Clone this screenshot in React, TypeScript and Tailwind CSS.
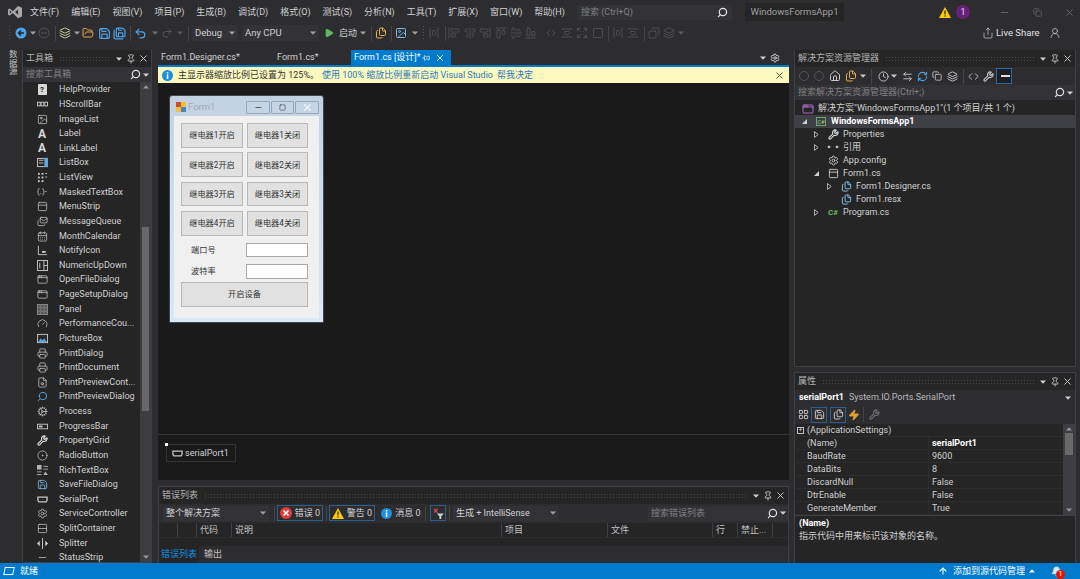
import type { ReactNode } from "react";
import {
  AlignCenterHorizontal, AlignCenterVertical, AlignEndHorizontal, AlignEndVertical,
  AlignHorizontalSpaceAround, AlignStartHorizontal, AlignStartVertical, AlignVerticalSpaceAround,
  AppWindow, ArrowLeftRight, ArrowUp, Bell, CalendarDays, ChevronsLeftRight, CircleDot, Clock,
  Code, Cog, Copy, Expand, FileSearch, Files, FolderOpen, Gauge, Home, Image,
  Layers, LayoutGrid, Mails, Minus, PanelTop, Pin, Play, Printer, Redo2, RefreshCw, Rows2, Save,
  SaveAll, Search, Settings, Share, Square, Undo2, UserRound, Wrench, X, Zap,
} from "lucide-react";

const menus = ["文件(F)", "编辑(E)", "视图(V)", "项目(P)", "生成(B)", "调试(D)", "格式(O)", "测试(S)", "分析(N)", "工具(T)", "扩展(X)", "窗口(W)", "帮助(H)"];

const Caret = ({ className = "" }: { className?: string }) => (
  <svg viewBox="0 0 6 4" className={`w-[6px] h-[4px] shrink-0 fill-current ${className}`}>
    <path d="M0 0.5h6L3 3.8z" />
  </svg>
);

const Sep = ({ className = "" }: { className?: string }) => (
  <div className={`w-px h-[15px] shrink-0 bg-[#46464a] ${className}`} />
);

const Grip = ({ className = "" }: { className?: string }) => (
  <div className={`w-[4px] h-[16px] shrink-0 bg-[radial-gradient(#55555a_1px,transparent_1px)] bg-[length:3px_3px] ${className}`} />
);

const InfoDot = ({ className = "" }: { className?: string }) => (
  <svg viewBox="0 0 12 12" className={`w-[11px] h-[11px] shrink-0 ${className}`}>
    <circle cx="6" cy="6" r="6" fill="#1c8fe0" />
    <rect x="5.2" y="2.2" width="1.7" height="1.7" fill="#fff" />
    <rect x="5.2" y="4.8" width="1.7" height="5" fill="#fff" />
  </svg>
);

const PanelHeader = ({ title }: { title: string }) => (
  <div className="h-[17px] shrink-0 flex items-center pl-[3px] pr-[2.5px] text-[#b4b4b4]">
    <span>{title}</span>
    <div className="flex-1 h-[5px] mx-[6px] bg-[radial-gradient(#46464a_0.8px,transparent_0.8px)] bg-[length:3px_3px]" />
    <Caret className="text-[#d0d0d0]" />
    <Pin size={10} strokeWidth={2} className="ml-[4px] text-[#d0d0d0]" />
    <X size={11} strokeWidth={2} className="ml-[1.5px] text-[#d0d0d0]" />
  </div>
);

const SearchBox = ({ placeholder, className = "" }: { placeholder: string; className?: string }) => (
  <div className={`flex items-center bg-[#333337] text-[#808080] pl-[3px] ${className}`}>
    <span className="flex-1 whitespace-nowrap">{placeholder}</span>
    <Search size={11} strokeWidth={2.6} className="text-[#e0e0e0] -scale-x-100" />
    <Caret className="ml-[2px] mr-[2px] w-[4px] text-[#d0d0d0]" />
  </div>
);

const HelpIcon = () => (
  <div className="w-[9px] h-[11px] rounded-[1px] bg-[#d8d8d8] text-[#252526] font-bold text-[8px] leading-[11px] text-center">?</div>
);
const HBar = () => (
  <svg viewBox="0 0 12 12" className="w-[11px] h-[11px]" fill="none" stroke="#c8c8c8">
    <rect x="0.5" y="3.5" width="3" height="4" /><rect x="4.5" y="3.5" width="3" height="4" /><rect x="8.5" y="3.5" width="3" height="4" />
  </svg>
);
const ListBoxIcon = () => (
  <svg viewBox="0 0 12 12" className="w-[11px] h-[11px]">
    <rect x="0.5" y="1.5" width="11" height="9" fill="none" stroke="#c8c8c8" />
    <rect x="2" y="3" width="5" height="1" fill="#c8c8c8" /><rect x="2" y="6" width="5" height="1" fill="#c8c8c8" />
    <rect x="8" y="1" width="4" height="10" fill="#5aa7e0" />
  </svg>
);
const ListViewIcon = () => (
  <svg viewBox="0 0 12 12" className="w-[11px] h-[11px]" fill="#d0d0d0">
    <rect x="1" y="1" width="2" height="2" /><rect x="5" y="1" width="2" height="2" /><rect x="9" y="1" width="2" height="1" />
    <rect x="1" y="5" width="2" height="2" /><rect x="5" y="5" width="2" height="2" /><rect x="9" y="5" width="2" height="1" />
    <rect x="1" y="9" width="2" height="2" /><rect x="5" y="9" width="2" height="2" />
  </svg>
);
const NotifyIcon = () => (
  <svg viewBox="0 0 12 12" className="w-[11px] h-[11px]" fill="none" stroke="#c8c8c8">
    <path d="M1.5 1v9.5H11" /><rect x="6" y="7" width="3" height="1" />
  </svg>
);
const NumericIcon = () => (
  <svg viewBox="0 0 12 12" className="w-[11px] h-[11px]" fill="none" stroke="#c8c8c8">
    <rect x="0.5" y="0.5" width="11" height="11" /><path d="M3 3v6M7.5 0.5v11M7.5 6h4" />
  </svg>
);
const PanelIcon = () => (
  <svg viewBox="0 0 12 12" className="w-[11px] h-[11px]">
    <rect x="0.5" y="0.5" width="11" height="11" fill="#58585c" stroke="#8a8a8a" /><path d="M4 1v10M8 1v10M1 4h10M1 8h10" stroke="#7a7a7a" />
  </svg>
);
const PictureIcon = () => (
  <svg viewBox="0 0 12 12" className="w-[11px] h-[11px]">
    <rect x="0.5" y="1.5" width="11" height="9" fill="#2a2a2c" stroke="#c8c8c8" /><path d="M1 10l3-4 2 2 2-2 3 4z" fill="#5aa7e0" />
  </svg>
);
const ProgressIcon = () => (
  <svg viewBox="0 0 12 12" className="w-[11px] h-[11px]">
    <rect x="0.5" y="3.5" width="11" height="5" fill="none" stroke="#c8c8c8" /><rect x="2" y="5" width="4" height="2" fill="#c8c8c8" />
  </svg>
);
const SerialIcon = () => (
  <svg viewBox="0 0 12 12" className="w-[11px] h-[11px] shrink-0" fill="none" stroke="#c8c8c8" strokeWidth="1.4">
    <path d="M1 3.5h10v3.5l-1 1.5H2L1 7z" />
  </svg>
);
const RichIcon = () => (
  <svg viewBox="0 0 12 12" className="w-[11px] h-[11px]" fill="#b0b0b0">
    <rect x="0" y="0" width="5" height="5" /><rect x="7" y="1" width="5" height="1" /><rect x="7" y="4" width="5" height="1" />
    <rect x="0" y="7" width="5" height="1" /><rect x="0" y="10" width="5" height="1" /><path d="M7 11l2-4 3 4z" />
  </svg>
);
const SplitterIcon = () => (
  <svg viewBox="0 0 12 12" className="w-[11px] h-[11px]" fill="#d0d0d0">
    <rect x="5.5" y="0" width="1" height="12" /><path d="M0 6l3-3v6zM12 6L9 3v6z" />
  </svg>
);

const ic = { size: 11, strokeWidth: 1.6, className: "text-[#c8c8c8]" };
const A = () => <span className="font-bold text-[12px] leading-none text-[#d8d8d8]">A</span>;

const toolbox: { name: string; icon: ReactNode }[] = [
  { name: "HelpProvider", icon: <HelpIcon /> },
  { name: "HScrollBar", icon: <HBar /> },
  { name: "ImageList", icon: <Image {...ic} /> },
  { name: "Label", icon: <A /> },
  { name: "LinkLabel", icon: <A /> },
  { name: "ListBox", icon: <ListBoxIcon /> },
  { name: "ListView", icon: <ListViewIcon /> },
  { name: "MaskedTextBox", icon: <span className="text-[8px] leading-none text-[#c8c8c8]">(.)-</span> },
  { name: "MenuStrip", icon: <PanelTop {...ic} /> },
  { name: "MessageQueue", icon: <Mails {...ic} /> },
  { name: "MonthCalendar", icon: <CalendarDays {...ic} /> },
  { name: "NotifyIcon", icon: <NotifyIcon /> },
  { name: "NumericUpDown", icon: <NumericIcon /> },
  { name: "OpenFileDialog", icon: <AppWindow {...ic} /> },
  { name: "PageSetupDialog", icon: <AppWindow {...ic} /> },
  { name: "Panel", icon: <PanelIcon /> },
  { name: "PerformanceCou...", icon: <Gauge {...ic} /> },
  { name: "PictureBox", icon: <PictureIcon /> },
  { name: "PrintDialog", icon: <Printer {...ic} /> },
  { name: "PrintDocument", icon: <Printer {...ic} /> },
  { name: "PrintPreviewCont...", icon: <FileSearch {...ic} /> },
  { name: "PrintPreviewDialog", icon: <Search size={11} strokeWidth={2} className="text-[#5aa7e0] -scale-x-100" /> },
  { name: "Process", icon: <Cog {...ic} /> },
  { name: "ProgressBar", icon: <ProgressIcon /> },
  { name: "PropertyGrid", icon: <Wrench size={11} strokeWidth={2.4} className="text-[#e0e0e0]" /> },
  { name: "RadioButton", icon: <CircleDot {...ic} /> },
  { name: "RichTextBox", icon: <RichIcon /> },
  { name: "SaveFileDialog", icon: <Save size={11} strokeWidth={1.8} className="text-[#7fb6e6]" /> },
  { name: "SerialPort", icon: <SerialIcon /> },
  { name: "ServiceController", icon: <Settings {...ic} /> },
  { name: "SplitContainer", icon: <Rows2 {...ic} /> },
  { name: "Splitter", icon: <SplitterIcon /> },
  { name: "StatusStrip", icon: <Minus {...ic} /> },
];

const gray = { size: 12, strokeWidth: 1.4 };

const TitleBar = () => (
  <div className="h-[24px] shrink-0 flex items-center text-[#d0d0d0]">
    <svg viewBox="0 0 16 16" className="ml-[8px] w-[14px] h-[14px] fill-[#a8a8a8]">
      <path d="M11.5 1L16 3v10l-4.5 2-6-6-3.5 3-2-1V5l2-1 3.5 3zM2 6v4l2-2zM11.5 5L8 8l3.5 3z" />
    </svg>
    <div className="ml-[8px] w-[535px] shrink-0 flex justify-between">
      {menus.map((m) => <span key={m} className="whitespace-nowrap">{m}</span>)}
    </div>
    <div className="ml-[12px] w-[155px] h-[15px] flex items-center justify-between px-[4px] bg-[#333337] text-[#808080]">
      <span>搜索 (Ctrl+Q)</span>
      <Search size={11} strokeWidth={2.6} className="text-[#e8e8e8] -scale-x-100" />
    </div>
    <div className="ml-[13px] w-[99px] h-[18px] flex items-center justify-center bg-[#252526] text-[#a0a0a0] text-[9.5px]">WindowsFormsApp1</div>
    <svg viewBox="0 0 12 11" className="ml-[95px] w-[12px] h-[11px]">
      <path d="M6 0l6 11H0z" fill="#ffcc00" /><rect x="5.4" y="3.5" width="1.2" height="4" fill="#222" /><rect x="5.4" y="8.3" width="1.2" height="1.3" fill="#222" />
    </svg>
    <div className="ml-[5px] w-[14px] h-[14px] rounded-full bg-[#68217a] flex items-center justify-center text-[#e8d8ee] text-[9px]">1</div>
    <Minus size={11} className="ml-[29px] text-[#6a6a6a]" />
    <Copy size={9} className="ml-[23px] text-[#6a6a6a]" />
    <X size={11} className="ml-[22px] text-[#6a6a6a]" />
  </div>
);

const Toolbar = () => (
  <div className="h-[18px] mb-[8px] shrink-0 flex items-center text-[#d0d0d0]">
    <Grip className="ml-[8px]" />
    <svg viewBox="0 0 12 12" className="ml-[3px] w-[12px] h-[12px]">
      <circle cx="6" cy="6" r="5.5" fill="#4da3e8" /><path d="M3 6h6M6 3.5L3.5 6 6 8.5" stroke="#222" strokeWidth="1.4" fill="none" />
    </svg>
    <Caret className="ml-[3px] text-[#a0a0a0]" />
    <svg viewBox="0 0 12 12" className="ml-[2px] w-[12px] h-[12px]">
      <circle cx="6" cy="6" r="5" fill="none" stroke="#55555a" /><path d="M3 6h6" stroke="#55555a" />
    </svg>
    <Sep className="ml-[5px]" />
    <Layers size={12} className="ml-[3px] text-[#c8c8a0]" />
    <Caret className="ml-[3px] text-[#a0a0a0]" />
    <FolderOpen size={12} strokeWidth={2} className="ml-[2px] text-[#e0a84c]" />
    <Save size={13} strokeWidth={2.2} className="ml-[4px] text-[#4da3e8]" />
    <SaveAll size={13} strokeWidth={2.2} className="ml-[2px] text-[#4da3e8]" />
    <Sep className="ml-[4px]" />
    <Undo2 size={13} strokeWidth={2.2} className="ml-[3px] text-[#4da3e8]" />
    <Caret className="ml-[5px] text-[#707070]" />
    <Redo2 size={12} className="ml-[3px] text-[#55555a]" />
    <Caret className="ml-[4px] text-[#55555a]" />
    <Sep className="ml-[5px]" />
    <div className="ml-[3px] w-[46px] h-[16px] flex items-center justify-between pl-[3px] pr-[3px] bg-[#333337]">
      <span className="text-[9.5px]">Debug</span><Caret className="w-[4px] text-[#a0a0a0]" />
    </div>
    <div className="ml-[4px] w-[77px] h-[16px] flex items-center justify-between pl-[3px] pr-[3px] bg-[#333337]">
      <span className="text-[9.5px]">Any CPU</span><Caret className="w-[4px] text-[#a0a0a0]" />
    </div>
    <Play size={10} className="ml-[5px] text-[#5fb85f] fill-[#5fb85f]" />
    <span className="ml-[5px] whitespace-nowrap">启动</span>
    <Caret className="ml-[3px] w-[4px] text-[#a0a0a0]" />
    <Sep className="ml-[5px]" />
    <Files size={12} strokeWidth={2} className="ml-[3px] text-[#e0b050]" />
    <Sep className="ml-[4px]" />
    <Image size={12} className="ml-[3px] text-[#7fb6e6]" />
    <Caret className="ml-[5px] w-[4px] text-[#a0a0a0]" />
    <Grip className="ml-[4px]" />
    <div className="ml-[2px] flex items-center text-[#5c5c60]">
      <AlignHorizontalSpaceAround {...gray} />
      <Sep className="ml-[5px]" />
      <AlignStartVertical {...gray} className="ml-[2px]" />
      <AlignCenterVertical {...gray} className="ml-[4px]" />
      <AlignEndVertical {...gray} className="ml-[3px]" />
      <AlignStartHorizontal {...gray} className="ml-[4px]" />
      <AlignCenterHorizontal {...gray} className="ml-[3px]" />
      <AlignEndHorizontal {...gray} className="ml-[3px]" />
      <ChevronsLeftRight {...gray} className="ml-[8px]" />
      <AlignVerticalSpaceAround {...gray} className="ml-[4px]" />
      <Expand {...gray} className="ml-[3px]" />
      <Square {...gray} className="ml-[4px]" />
      <Sep className="ml-[4px]" />
      <AlignHorizontalSpaceAround {...gray} className="ml-[3px]" />
      <AlignVerticalSpaceAround {...gray} className="ml-[3px]" />
      <Sep className="ml-[5px]" />
      <Copy {...gray} className="ml-[3px] -scale-x-100" />
      <Layers {...gray} className="ml-[3px]" />
      <Caret className="ml-[3px] w-[4px]" />
    </div>
    <div className="ml-auto flex items-center">
      <Share size={12} strokeWidth={1.4} />
      <span className="ml-[2px] w-[41px] text-[#e0e0e0] text-[9.5px] whitespace-nowrap">Live Share</span>
      <UserRound size={12} strokeWidth={1.4} className="ml-[12px] mr-[19px]" />
    </div>
  </div>
);

const ToolboxPanel = () => (
  <div className="w-[130px] shrink-0 flex flex-col border border-t-0 border-[#3f3f46] bg-[#252526]">
    <PanelHeader title="工具箱" />
    <SearchBox placeholder="搜索工具箱" className="h-[15px] shrink-0" />
    <div className="flex-1 min-h-0 flex overflow-hidden">
      <div className="flex-1 overflow-hidden text-[#d0d0d0]">
        <div className="pt-[0.5px]">
          {toolbox.map((t) => (
            <div key={t.name} className="h-[14.63px] flex items-center whitespace-nowrap">
              <div className="w-[14px] ml-[12px] mr-[10px] flex items-center justify-center">{t.icon}</div>
              <span>{t.name}</span>
            </div>
          ))}
        </div>
      </div>
      <div className="w-[11px] shrink-0 flex flex-col items-center bg-[#3e3e42] text-[#999]">
        <Caret className="mt-[3px] rotate-180" />
        <div className="mt-[138px] w-[7px] h-[184px] bg-[#686868]" />
        <Caret className="mt-auto mb-[3px]" />
      </div>
    </div>
  </div>
);

const relay = [1, 2, 3, 4];
const btn = "flex items-center justify-center bg-[#e1e1e1] border border-[#b8b8b8] text-[#333]";

const FormPreview = () => (
  <div className="mt-[12px] ml-[11px] w-[155px] h-[228px] flex flex-col rounded-t-[3px] border border-[#45464a] bg-[linear-gradient(#c3d2e3,#dbe8f5)] px-[4px] pb-[4px] text-[8.2px]">
    <div className="h-[20px] shrink-0 flex items-center pt-[2px]">
      <div className="w-[10px] h-[10px] ml-[2px] grid grid-cols-2">
        <div className="bg-[#d64a2c]" /><div className="bg-[#f2c335]" /><div className="bg-[#f2c335]" /><div className="bg-[#4a82c8]" />
      </div>
      <span className="ml-[2px] text-[9.5px] text-[#a0aab6]">Form1</span>
      <div className="ml-auto flex gap-[1px]">
        <div className="w-[24px] h-[13px] flex items-center justify-center border border-[#93a8c0] bg-[#c5d5e6] rounded-[1px]"><Minus size={9} strokeWidth={2.4} className="text-[#556]" /></div>
        <div className="w-[23px] h-[13px] flex items-center justify-center border border-[#93a8c0] bg-[#c5d5e6] rounded-[1px]"><Square size={7} strokeWidth={2.4} className="text-[#556]" /></div>
        <div className="w-[24px] h-[13px] flex items-center justify-center border border-[#93a8c0] bg-[#c5d5e6] rounded-[1px]"><X size={11} strokeWidth={3} className="text-[#f0f4f8]" /></div>
      </div>
    </div>
    <div className="flex-1 bg-[#f0f0f0] pt-[7px] pl-[7px]">
      <div className="grid grid-cols-[62px_61px] gap-x-[4px] gap-y-[4.8px]">
        {relay.map((n) => [
          <div key={`on${n}`} className={`h-[24.6px] ${btn}`}>继电器{n}开启</div>,
          <div key={`off${n}`} className={`h-[24.6px] ${btn}`}>继电器{n}关闭</div>,
        ])}
      </div>
      <div className="mt-[7.5px] h-[14px] flex items-center">
        <span className="ml-[10px] w-[55px] text-[#333]">端口号</span>
        <div className="w-[62px] h-[14px] bg-white border border-[#a8a8a8]" />
      </div>
      <div className="mt-[6.5px] h-[15px] flex items-center">
        <span className="ml-[10px] w-[55px] text-[#333]">波特率</span>
        <div className="w-[62px] h-[15px] bg-white border border-[#a8a8a8]" />
      </div>
      <div className={`mt-[3px] w-[127px] h-[25px] ${btn}`}>开启设备</div>
    </div>
  </div>
);

const colCls = "h-full flex items-center pl-[3px] border-r border-[#3f3f46] whitespace-nowrap";

const CenterPanel = () => (
  <div className="flex-1 min-w-0 flex flex-col">
    <div className="h-[15px] shrink-0 flex items-center text-[#d0d0d0]">
      <span className="ml-[3px] w-[116px]">Form1.Designer.cs*</span>
      <span className="w-[74px]">Form1.cs*</span>
      <div className="w-[100px] h-full flex items-center pl-[3px] bg-[#007acc] text-white">
        <span className="w-[68px] whitespace-nowrap">Form1.cs [设计]*</span>
        <Pin size={8} className="rotate-90" />
        <X size={10} strokeWidth={2.2} className="ml-[5px]" />
      </div>
      <Caret className="ml-auto text-[#d0d0d0]" />
      <Settings size={10} strokeWidth={2.4} className="ml-[4px] mr-[9px] text-[#d0d0d0]" />
    </div>
    <div className="h-[2px] shrink-0 bg-[#007acc]" />
    <div className="h-[16px] shrink-0 flex items-center bg-[#fcf9bf] text-[#333]">
      <InfoDot className="ml-[4px]" />
      <span className="ml-[5px] w-[144px] whitespace-nowrap">主显示器缩放比例已设置为 125%。</span>
      <span className="w-[175px] whitespace-nowrap text-[#2a78c0]">使用 100% 缩放比例重新启动 Visual Studio</span>
      <span className="whitespace-nowrap text-[#2a78c0]">帮我决定</span>
      <X size={11} className="ml-auto mr-[4px] text-[#444]" />
    </div>
    <div className="h-[352px] shrink-0 bg-[#1a1a1a] border-b border-[#36363a]">
      <FormPreview />
    </div>
    <div className="relative h-[45px] shrink-0 bg-[#1a1a1a] pt-[9px] pl-[8px]">
      <div className="absolute left-[7px] top-[8px] w-[3px] h-[3px] bg-white" />
      <div className="w-[70px] h-[18px] flex items-center gap-[2px] pl-[5px] border border-[#333337] text-[#d0d0d0]">
        <SerialIcon /><span>serialPort1</span>
      </div>
    </div>
    <div className="flex-1 min-h-0 mt-[6px] flex flex-col border border-[#3f3f46] border-b-0 bg-[#252526]">
      <PanelHeader title="错误列表" />
      <div className="h-[18px] shrink-0 flex items-center bg-[#2d2d30] text-[#d0d0d0]">
        <div className="ml-[4px] w-[106px] h-[15px] flex items-center justify-between px-[3px] bg-[#333337]">
          <span>整个解决方案</span><Caret className="w-[4px] text-[#a0a0a0]" />
        </div>
        <Sep className="ml-[5px]" />
        <div className="ml-[2px] w-[46px] h-[16px] flex items-center justify-center gap-[3px] border border-[#2c5f8f]">
          <svg viewBox="0 0 12 12" className="w-[12px] h-[12px]"><circle cx="6" cy="6" r="6" fill="#e03c3c" /><path d="M3.5 3.5l5 5M8.5 3.5l-5 5" stroke="#fff" strokeWidth="1.6" /></svg>
          <span>错误 0</span>
        </div>
        <Sep className="ml-[3px]" />
        <div className="ml-[2px] w-[46px] h-[16px] flex items-center justify-center gap-[3px] border border-[#2c5f8f]">
          <svg viewBox="0 0 12 11" className="w-[12px] h-[11px]"><path d="M6 0l6 11H0z" fill="#ffcc00" /><rect x="5.4" y="3.5" width="1.2" height="4" fill="#222" /><rect x="5.4" y="8.3" width="1.2" height="1.3" fill="#222" /></svg>
          <span>警告 0</span>
        </div>
        <div className="ml-[6px] w-[40px] h-[16px] flex items-center justify-center gap-[3px]">
          <InfoDot />
          <span className="whitespace-nowrap">消息 0</span>
        </div>
        <Sep className="ml-[4px]" />
        <div className="ml-[4px] w-[16px] h-[16px] flex items-center justify-center border border-[#2c5f8f]">
          <svg viewBox="0 0 12 12" className="w-[11px] h-[11px]"><path d="M1 1l4 4M5 1L1 5" stroke="#e05050" strokeWidth="1.4" /><path d="M4 6h8L9 9v3H7V9z" fill="#d0d0d0" /></svg>
        </div>
        <Sep className="ml-[3px]" />
        <div className="ml-[3px] w-[106px] h-[15px] flex items-center justify-between px-[3px] bg-[#333337]">
          <span className="whitespace-nowrap">生成 + IntelliSense</span><Caret className="w-[4px] text-[#a0a0a0]" />
        </div>
        <SearchBox placeholder="搜索错误列表" className="ml-auto w-[140px] h-[15px]" />
      </div>
      <div className="h-[16px] shrink-0 flex items-center text-[#c0c0c0] border-y border-[#2d2d30]">
        <div className={`w-[19px] ${colCls}`} />
        <div className={`w-[19px] ${colCls}`} />
        <div className={`w-[35px] ${colCls}`}>代码</div>
        <div className={`w-[270px] ${colCls}`}>说明</div>
        <div className={`w-[106px] ${colCls}`}>项目</div>
        <div className={`w-[105px] ${colCls}`}>文件</div>
        <div className={`w-[25px] ${colCls}`}>行</div>
        <div className={`w-[35px] ${colCls}`}>禁止...</div>
      </div>
      <div className="flex-1 min-h-0" />
      <div className="h-[17px] shrink-0 flex items-stretch bg-[#2d2d30]">
        <div className="w-[40px] flex items-center justify-center bg-[#252526] text-[#0e8fe0]">错误列表</div>
        <div className="ml-[5px] flex items-center text-[#c0c0c0]">输出</div>
      </div>
    </div>
  </div>
);

const tree: { label: string; indent: string; arrow?: "open" | "closed"; icon: ReactNode; selected?: boolean; bold?: boolean }[] = [
  { label: "解决方案\"WindowsFormsApp1\"(1 个项目/共 1 个)", indent: "-ml-[8px]", icon: <AppWindow size={12} className="text-[#b06ad0]" /> },
  { label: "WindowsFormsApp1", indent: "ml-[5px]", arrow: "open", selected: true, bold: true, icon: <span className="w-[10px] h-[9px] border border-[#68a868] text-[6px] leading-[7px] text-center text-[#8cc88c]">C#</span> },
  { label: "Properties", indent: "ml-[17px]", arrow: "closed", icon: <Wrench size={11} strokeWidth={2.4} className="text-[#e0e0e0]" /> },
  { label: "引用", indent: "ml-[17px]", arrow: "closed", icon: <span className="text-[8px] leading-none text-[#d0d0d0]">▪▪</span> },
  { label: "App.config", indent: "ml-[17px]", icon: <Settings size={11} className="text-[#c8c8c8]" /> },
  { label: "Form1.cs", indent: "ml-[17px]", arrow: "open", icon: <PanelTop size={11} className="text-[#c8c8c8]" /> },
  { label: "Form1.Designer.cs", indent: "ml-[30px]", arrow: "closed", icon: <Files size={11} className="text-[#8cc4ec]" /> },
  { label: "Form1.resx", indent: "ml-[30px]", icon: <Files size={11} className="text-[#8cc4ec]" /> },
  { label: "Program.cs", indent: "ml-[17px]", arrow: "closed", icon: <span className="text-[8px] leading-none font-bold text-[#68b868]">C#</span> },
];

const SolutionPanel = () => (
  <div className="h-[317px] shrink-0 flex flex-col border border-t-0 border-[#3f3f46] bg-[#252526] text-[#d0d0d0]">
    <PanelHeader title="解决方案资源管理器" />
    <div className="h-[18px] shrink-0 flex items-center bg-[#2d2d30] pl-[4px] text-[#c8c8c8]">
      <div className="w-[10px] h-[10px] rounded-full border border-[#55555a]" />
      <div className="ml-[5px] w-[10px] h-[10px] rounded-full border border-[#55555a]" />
      <Home size={12} className="ml-[5px]" />
      <Files size={12} className="ml-[4px] text-[#e0b050]" />
      <Caret className="ml-[3px] w-[4px]" />
      <Sep className="ml-[5px]" />
      <Clock size={11} className="ml-[5.5px]" />
      <Caret className="ml-[2.5px] w-[4px]" />
      <ArrowLeftRight size={11} className="ml-[4.5px]" />
      <RefreshCw size={11} strokeWidth={2.2} className="ml-[4px] text-[#4da3e8]" />
      <Copy size={10} className="ml-[4.5px]" />
      <Layers size={11} className="ml-[4.5px]" />
      <Sep className="ml-[5.5px]" />
      <Code size={11} className="ml-[3.5px]" />
      <Wrench size={11} strokeWidth={2.4} className="ml-[4px]" />
      <div className="ml-[2.5px] w-[16px] h-[16px] flex items-center justify-center border border-[#2c6aa8] bg-[#1f1f22]">
        <div className="ml-[3px] w-[9px] h-[2px] bg-[#e0e0e0]" />
      </div>
    </div>
    <SearchBox placeholder="搜索解决方案资源管理器(Ctrl+;)" className="h-[15px] shrink-0" />
    <div className="pt-[2px]">
      {tree.map((r) => (
        <div key={r.label} className={`h-[13px] flex items-center whitespace-nowrap ${r.selected ? "bg-[#3f3f46] text-white" : ""}`}>
          <div className={`${r.indent} w-[8px] flex items-center justify-center`}>
            {r.arrow === "open" && <svg viewBox="0 0 6 6" className="w-[5px] h-[5px] fill-[#d0d0d0]"><path d="M6 0v6H0z" /></svg>}
            {r.arrow === "closed" && <svg viewBox="0 0 6 8" className="w-[5px] h-[7px] fill-none stroke-[#d0d0d0]"><path d="M0.5 0.5L5 4 0.5 7.5z" /></svg>}
          </div>
          <div className="ml-[7px] w-[12px] flex items-center justify-center">{r.icon}</div>
          <span className={`ml-[4px] ${r.bold ? "font-bold" : ""}`}>{r.label}</span>
        </div>
      ))}
    </div>
  </div>
);

const props = [
  ["(Name)", "serialPort1"],
  ["BaudRate", "9600"],
  ["DataBits", "8"],
  ["DiscardNull", "False"],
  ["DtrEnable", "False"],
  ["GenerateMember", "True"],
];

const PropertiesPanel = () => (
  <div className="flex-1 min-h-0 mt-[5px] flex flex-col border border-[#3f3f46] border-b-0 bg-[#252526] text-[#d0d0d0]">
    <PanelHeader title="属性" />
    <div className="h-[15px] shrink-0 flex items-center bg-[#2d2d30] pl-[4px] pr-[4px]">
      <span className="font-bold text-white">serialPort1</span>
      <span className="ml-[5px] text-[#b8b8b8]">System.IO.Ports.SerialPort</span>
      <Caret className="ml-auto w-[4px]" />
    </div>
    <div className="h-[19px] shrink-0 flex items-center pl-[3px] bg-[#2d2d30]">
      <LayoutGrid size={11} className="text-[#c8c8c8]" />
      <div className="ml-[2px] w-[16px] h-[16px] flex items-center justify-center border border-[#2c5f8f]"><Save size={11} /></div>
      <div className="ml-[3px] w-[16px] h-[16px] flex items-center justify-center border border-[#2c5f8f]"><Files size={11} /></div>
      <Zap size={12} className="ml-[2px] text-[#e0a030] fill-[#e0a030]" />
      <Sep className="ml-[3px]" />
      <Wrench size={11} strokeWidth={2.4} className="ml-[5px] text-[#707074]" />
    </div>
    <div className="h-[91px] shrink-0 flex">
      <div className="flex-1 min-w-0">
        <div className="h-[13px] flex items-center border-b border-[#2d2d30]">
          <div className="ml-[2px] w-[7px] h-[7px] border border-[#c0c0c0] flex items-center justify-center text-[7px] leading-none">+</div>
          <span className="ml-[3px]">(ApplicationSettings)</span>
        </div>
        {props.map(([k, v], i) => (
          <div key={k} className="h-[13px] flex items-center border-b border-[#2d2d30]">
            <span className="ml-[12px] w-[122px] shrink-0 border-r border-[#2d2d30] h-full leading-[13px]">{k}</span>
            <span className={`ml-[3px] ${i === 0 ? "font-bold text-white" : ""}`}>{v}</span>
          </div>
        ))}
      </div>
      <div className="w-[12px] shrink-0 flex flex-col items-center bg-[#3e3e42] text-[#999]">
        <Caret className="mt-[3px] rotate-180" />
        <div className="mt-[2px] w-[8px] h-[22px] bg-[#686868]" />
        <Caret className="mt-auto mb-[3px]" />
      </div>
    </div>
    <div className="flex-1 min-h-0 border-t border-[#3f3f46] pt-[1px] pl-[4px]">
      <div className="font-bold text-white leading-[13px]">(Name)</div>
      <div className="leading-[13px]">指示代码中用来标识该对象的名称。</div>
    </div>
  </div>
);

const StatusBar = () => (
  <div className="h-[16px] shrink-0 flex items-center bg-[#007acc] text-white">
    <div className="ml-[4px] w-[10px] h-[8px] border border-white skew-x-[-12deg]" />
    <span className="ml-[6px]">就绪</span>
    <ArrowUp size={10} strokeWidth={2.6} className="ml-auto" />
    <span className="ml-[5px]">添加到源代码管理</span>
    <Caret className="ml-[4px] rotate-180" />
    <div className="relative ml-[16px] mr-[18px]">
      <Bell size={11} className="fill-[#d8e8f4] text-[#d8e8f4]" />
      <div className="absolute left-[5px] top-[4px] w-[9px] h-[9px] rounded-full bg-[#e51400] text-[7px] leading-[9px] text-center">1</div>
    </div>
  </div>
);

export default function App() {
  return (
    <div className="w-[1080px] h-[579px] overflow-hidden flex flex-col bg-[#2d2d30] text-[9px] leading-none font-['Roboto','Noto_Sans_CJK_SC',sans-serif]">
      <TitleBar />
      <Toolbar />
      <div className="flex-1 min-h-0 flex">
        <div className="w-[22px] shrink-0 pl-[7px]">
          <div className="h-[26px] w-[10px] flex items-center justify-center [writing-mode:vertical-rl] text-[#c0c0c0] text-[8.5px]">数据源</div>
        </div>
        <ToolboxPanel />
        <div className="w-[6px] shrink-0" />
        <CenterPanel />
        <div className="w-[5px] shrink-0" />
        <div className="w-[282px] shrink-0 mr-[4px] flex flex-col">
          <SolutionPanel />
          <PropertiesPanel />
        </div>
      </div>
      <StatusBar />
    </div>
  );
}
